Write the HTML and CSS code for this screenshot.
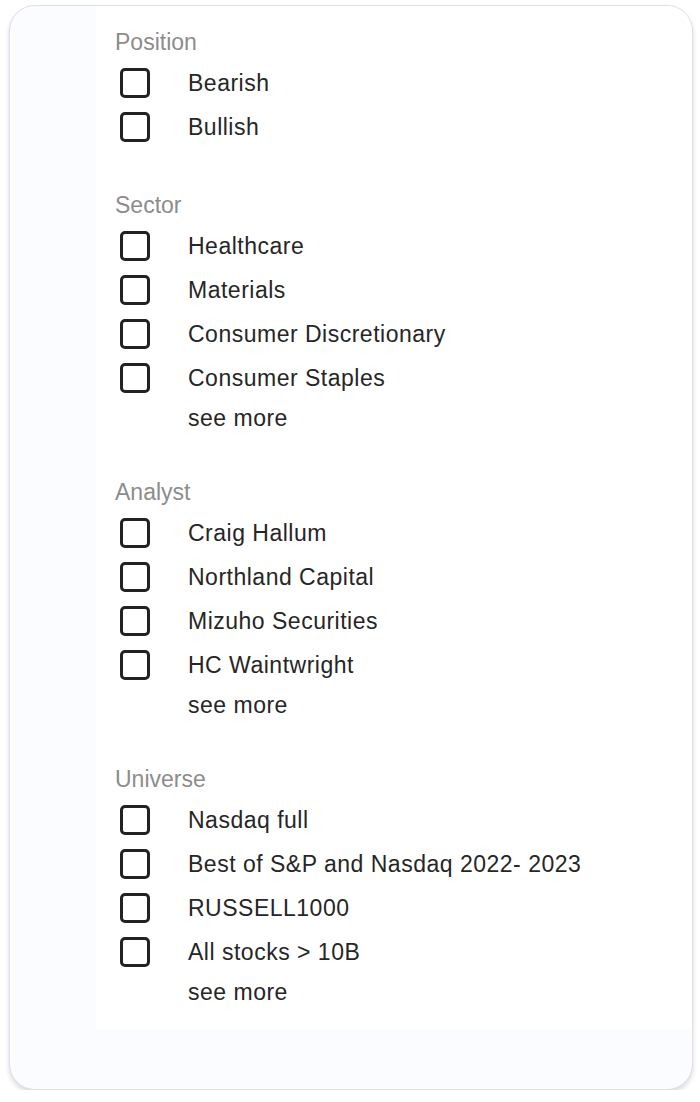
FILE: index.html
```html
<!DOCTYPE html>
<html>
<head>
<meta charset="utf-8">
<link rel="stylesheet" href="styles.css">
</head>
<body>
<div class="card">
  <div class="panel">
    <section class="group">
      <div class="group-title">Position</div>
      <label class="option"><span class="box"></span><span class="text">Bearish</span></label>
      <label class="option"><span class="box"></span><span class="text">Bullish</span></label>
    </section>
    <section class="group">
      <div class="group-title">Sector</div>
      <label class="option"><span class="box"></span><span class="text">Healthcare</span></label>
      <label class="option"><span class="box"></span><span class="text">Materials</span></label>
      <label class="option"><span class="box"></span><span class="text">Consumer Discretionary</span></label>
      <label class="option"><span class="box"></span><span class="text">Consumer Staples</span></label>
      <div class="more">see more</div>
    </section>
    <section class="group">
      <div class="group-title">Analyst</div>
      <label class="option"><span class="box"></span><span class="text">Craig Hallum</span></label>
      <label class="option"><span class="box"></span><span class="text">Northland Capital</span></label>
      <label class="option"><span class="box"></span><span class="text">Mizuho Securities</span></label>
      <label class="option"><span class="box"></span><span class="text">HC Waintwright</span></label>
      <div class="more">see more</div>
    </section>
    <section class="group">
      <div class="group-title">Universe</div>
      <label class="option"><span class="box"></span><span class="text">Nasdaq full</span></label>
      <label class="option"><span class="box"></span><span class="text">Best of S&amp;P and Nasdaq 2022- 2023</span></label>
      <label class="option"><span class="box"></span><span class="text">RUSSELL1000</span></label>
      <label class="option"><span class="box"></span><span class="text">All stocks &gt; 10B</span></label>
      <div class="more">see more</div>
    </section>
  </div>
</div>
</body>
</html>
```
FILE: styles.css
```css
html, body {
  margin: 0;
  padding: 0;
  background: #ffffff;
}
body {
  padding: 5px 8px 0 9px;
  font-family: "Liberation Sans", Arial, sans-serif;
}
.card {
  box-sizing: border-box;
  width: 684px;
  height: 1085px;
  border: 1px solid #e0e0e2;
  border-radius: 26px;
  background: #fbfcff;
  box-shadow: 0 3px 5px rgba(0, 0, 0, 0.14);
  overflow: hidden;
}
.panel {
  margin-left: 86px;
  height: 1024px;
  box-sizing: border-box;
  padding-top: 17px;
  background: #ffffff;
  display: flex;
  flex-direction: column;
  gap: 37px;
}
.group {
  display: flex;
  flex-direction: column;
}
.group-title {
  height: 38px;
  line-height: 38px;
  padding-left: 19px;
  font-size: 23px;
  color: #8c8c8c;
}
.option {
  height: 44px;
  display: flex;
  align-items: center;
  padding-left: 24px;
}
.box {
  box-sizing: border-box;
  width: 30px;
  height: 30px;
  border: 3px solid #222222;
  border-radius: 5px;
  flex: none;
  margin-top: -1px;
}
.text {
  margin-left: 38px;
  font-size: 23px;
  letter-spacing: 0.5px;
  color: #262626;
}
.more {
  height: 36px;
  line-height: 36px;
  padding-left: 92px;
  font-size: 23px;
  letter-spacing: 0.5px;
  color: #262626;
}
```
